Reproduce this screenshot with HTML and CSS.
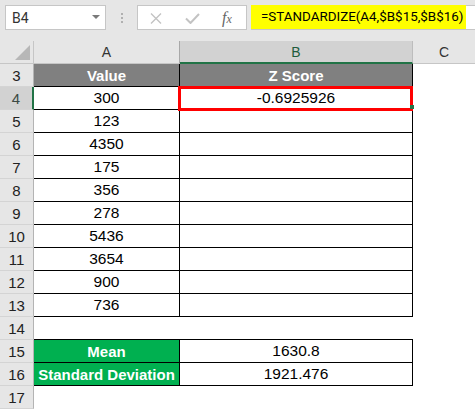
FILE: index.html
```html
<!DOCTYPE html>
<html>
<head>
<meta charset="utf-8">
<link rel="stylesheet" href="styles.css">
</head>
<body>
<div class="toolbar">
  <div class="namebox"><span class="nb-text">B4</span><span class="caret"></span></div>
  <div class="dots"><i></i><i></i><i></i></div>
  <div class="fxbox">
    <svg class="ic-x" width="12" height="11" viewBox="0 0 12 11"><path d="M1 0.5 L11 10.5 M11 0.5 L1 10.5" stroke="#c3c3c3" stroke-width="1.4" fill="none"/></svg>
    <svg class="ic-check" width="15" height="11" viewBox="0 0 15 11"><path d="M1 5.5 L5.5 10 L14 1" stroke="#c3c3c3" stroke-width="2" fill="none"/></svg>
    <span class="fx">f<sub>x</sub></span>
  </div>
  <div class="formula"><div class="formula-hl">=STANDARDIZE(A4,$B$15,$B$16)</div></div>
</div>
<div class="sheet">
  <div class="corner"><span class="tri"></span></div>
  <div class="ch">A</div>
  <div class="ch ch-sel">B</div>
  <div class="ch ch-last">C</div>

  <div class="rh">3</div><div class="c tb hd">Value</div><div class="c tb hd">Z Score</div><div class="c"></div>
  <div class="rh rh-sel">4</div><div class="c tb">300</div><div class="c tb active">-0.6925926<span class="handle"></span></div><div class="c"></div>
  <div class="rh">5</div><div class="c tb">123</div><div class="c tb"></div><div class="c"></div>
  <div class="rh">6</div><div class="c tb">4350</div><div class="c tb"></div><div class="c"></div>
  <div class="rh">7</div><div class="c tb">175</div><div class="c tb"></div><div class="c"></div>
  <div class="rh">8</div><div class="c tb">356</div><div class="c tb"></div><div class="c"></div>
  <div class="rh">9</div><div class="c tb">278</div><div class="c tb"></div><div class="c"></div>
  <div class="rh">10</div><div class="c tb">5436</div><div class="c tb"></div><div class="c"></div>
  <div class="rh">11</div><div class="c tb">3654</div><div class="c tb"></div><div class="c"></div>
  <div class="rh">12</div><div class="c tb">900</div><div class="c tb"></div><div class="c"></div>
  <div class="rh">13</div><div class="c tb">736</div><div class="c tb"></div><div class="c"></div>
  <div class="rh">14</div><div class="c under"></div><div class="c under"></div><div class="c"></div>
  <div class="rh">15</div><div class="c tb gr">Mean</div><div class="c tb">1630.8</div><div class="c"></div>
  <div class="rh">16</div><div class="c tb gr">Standard Deviation</div><div class="c tb">1921.476</div><div class="c"></div>
  <div class="rh">17</div><div class="c"></div><div class="c"></div><div class="c"></div>
</div>
</body>
</html>
```

FILE: styles.css
```css
* { box-sizing: border-box; }
html, body { margin: 0; padding: 0; background: #ffffff; }
body {
  width: 475px;
  height: 409px;
  overflow: hidden;
  font-family: "Liberation Sans", Arial, sans-serif;
  color: #000;
}

/* toolbar */
.toolbar {
  height: 41px;
  background: #e6e6e6;
  display: flex;
  align-items: flex-start;
  padding-top: 5px;
}
.namebox {
  margin-left: 5px;
  width: 101px;
  height: 25px;
  background: #fff;
  border: 1px solid #c6c6c6;
  display: flex;
  align-items: center;
  justify-content: space-between;
  padding: 0 5px 0 6px;
}
.nb-text {
  font-family: Roboto, "Liberation Sans", sans-serif;
  font-size: 14px;
  color: #333;
}
.caret {
  width: 0;
  height: 0;
  border-left: 4px solid transparent;
  border-right: 4px solid transparent;
  border-top: 4px solid #7a7a7a;
  margin-bottom: 2px;
}
.dots {
  width: 31px;
  height: 25px;
  display: flex;
  flex-direction: column;
  align-items: center;
  padding-top: 8px;
  gap: 2px;
}
.dots i {
  display: block;
  width: 2px;
  height: 2px;
  background: #b0b0b0;
}
.fxbox {
  width: 110px;
  height: 25px;
  background: #fff;
  border: 1px solid #c6c6c6;
  display: flex;
  align-items: center;
  padding-left: 12px;
}
.ic-x { margin-top: 1px; }
.ic-check { margin-left: 23px; margin-top: 1px; }
.fx {
  margin-left: 22px;
  font-family: "Liberation Serif", serif;
  font-style: italic;
  font-size: 16px;
  color: #666;
  line-height: 1;
}
.fx sub {
  font-size: 12px;
  vertical-align: 0;
}
.formula {
  margin-left: 4px;
  flex: 1;
  height: 25px;
  background: #fff;
  border: 1px solid #c6c6c6;
  border-right: none;
}
.formula-hl {
  width: 215px;
  height: 24px;
  background: #ffff00;
  padding-left: 10px;
  font-family: Roboto, "Liberation Sans", sans-serif;
  font-size: 13.4px;
  line-height: 24px;
  color: #000;
  white-space: nowrap;
  margin-top: -1px;
  margin-left: -1px;
}

/* sheet */
.sheet {
  display: grid;
  grid-template-columns: 34px 146px 233px 62px;
  grid-auto-rows: 23px;
}
.corner {
  background: #e6e6e6;
  border-right: 1px solid #c6c6c6;
  border-bottom: 1px solid #c6c6c6;
  position: relative;
}
.tri {
  position: absolute;
  right: 3px;
  bottom: 3px;
  width: 0;
  height: 0;
  border-left: 15px solid transparent;
  border-bottom: 15px solid #b7b7b7;
}
.ch {
  background: #e6e6e6;
  border-right: 1px solid #a8a8a8;
  border-bottom: 1px solid #c6c6c6;
  display: flex;
  align-items: center;
  justify-content: center;
  font-size: 14px;
  color: #333;
}
.ch-sel {
  background: #d2d2d2;
  border-right: 1px solid #bdbdbd;
  border-bottom: 2px solid #217346;
  color: #1f5c3c;
}
.ch-last { border-right: none; }

.rh {
  background: #e6e6e6;
  border-right: 1px solid #b4b4b4;
  border-bottom: 1px solid #d4d4d4;
  display: flex;
  align-items: center;
  justify-content: center;
  font-size: 15px;
  color: #222;
}
.rh-sel {
  background: #d2d2d2;
  border-right: 2px solid #217346;
  color: #3d4a44;
}
.c {
  display: flex;
  align-items: center;
  justify-content: center;
  font-size: 15.5px;
  white-space: nowrap;
}
.tb {
  border-right: 1px solid #000;
  border-bottom: 1px solid #000;
}
.under { border-bottom: 1px solid #000; }
.hd {
  background: #808080;
  color: #fff;
  font-weight: bold;
  font-size: 15px;
}
.gr {
  background: #00b050;
  color: #fff;
  font-weight: bold;
  font-size: 15px;
}
.active { position: relative; }
.active::after {
  content: "";
  position: absolute;
  left: -2px;
  top: -1px;
  right: -1px;
  bottom: -2px;
  border: 3px solid #ff0000;
}
.handle {
  position: absolute;
  right: -2px;
  bottom: 0px;
  width: 4px;
  height: 4px;
  background: #217346;
  z-index: 2;
}
```
